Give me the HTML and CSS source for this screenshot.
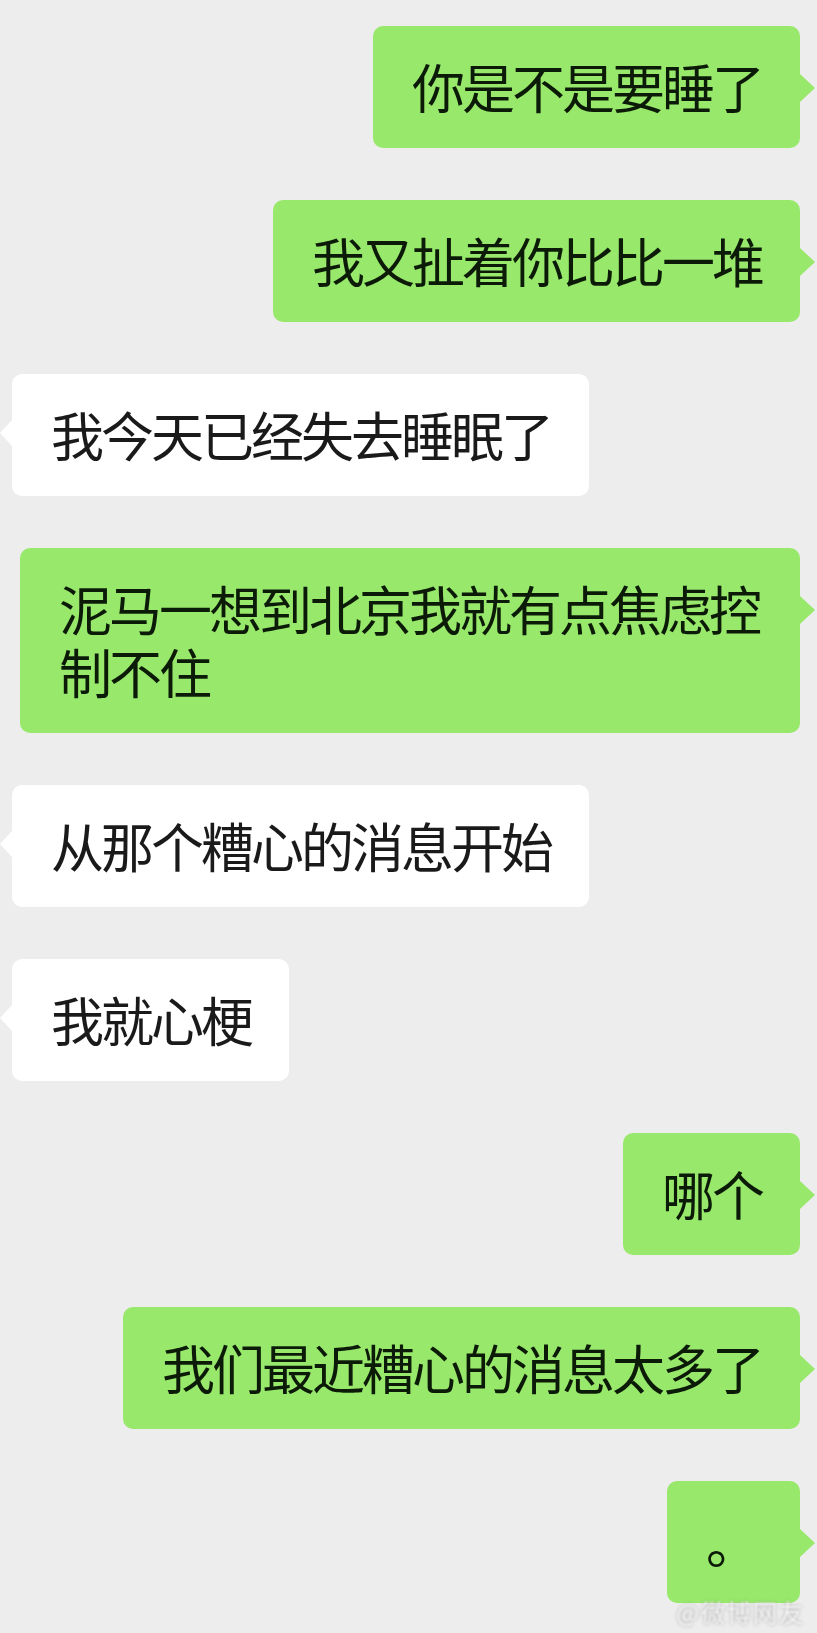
FILE: index.html
```html
<!DOCTYPE html>
<html lang="zh-CN">
<head>
    <meta charset="UTF-8">
    <meta name="viewport" content="width=device-width, initial-scale=1.0">
    <title>聊天记录</title>
    <link rel="stylesheet" href="styles.css">
</head>
<body>

    <div class="chat">
        <div class="msg msg-self">
            <div class="bubble">你是不是要睡了</div>
        </div>
        <div class="msg msg-self">
            <div class="bubble">我又扯着你比比一堆</div>
        </div>
        <div class="msg msg-other">
            <div class="bubble">我今天已经失去睡眠了</div>
        </div>
        <div class="msg msg-self">
            <div class="bubble">泥马一想到北京我就有点焦虑控制不住</div>
        </div>
        <div class="msg msg-other">
            <div class="bubble">从那个糟心的消息开始</div>
        </div>
        <div class="msg msg-other">
            <div class="bubble">我就心梗</div>
        </div>
        <div class="msg msg-self">
            <div class="bubble">哪个</div>
        </div>
        <div class="msg msg-self">
            <div class="bubble">我们最近糟心的消息太多了</div>
        </div>
        <div class="msg msg-self">
            <div class="bubble">。</div>
        </div>
    </div>

    <div class="watermark">@微博网友</div>

</body>
</html>
```

FILE: styles.css
```css
* {
    margin: 0;
    padding: 0;
    box-sizing: border-box;
}

body {
    background-color: #ededed;
    font-family: "Noto Sans CJK SC", "Noto Sans", sans-serif;
    min-height: 1633px;
    position: relative;
}

.chat {
    display: flex;
    flex-direction: column;
    gap: 52px;
    padding: 26px 17px 28px 12px;
}

.msg {
    display: flex;
}

.msg-self {
    justify-content: flex-end;
}

.msg-other {
    justify-content: flex-start;
}

.bubble {
    position: relative;
    min-width: 133px;
    max-width: 780px;
    padding: 29px 38px 30px 39px;
    font-size: 53px;
    letter-spacing: -3px;
    line-height: 63px;
    border-radius: 10px;
    word-break: break-all;
}

.msg-self .bubble {
    background-color: #98e86b;
    color: #0c1a08;
}

.msg-other .bubble {
    background-color: #fff;
    color: #1a1a1a;
}

/* little arrows */
.msg-self .bubble::after {
    content: "";
    position: absolute;
    top: 48px;
    right: -15px;
    border-top: 14px solid transparent;
    border-bottom: 14px solid transparent;
    border-left: 15px solid #98e86b;
}

.msg-other .bubble::before {
    content: "";
    position: absolute;
    top: 46px;
    left: -12px;
    border-top: 13px solid transparent;
    border-bottom: 13px solid transparent;
    border-right: 12px solid #fff;
}

.watermark {
    position: absolute;
    right: 12px;
    bottom: 8px;
    font-size: 24px;
    line-height: 26px;
    color: rgba(255, 255, 255, 0.95);
    text-shadow: 0 0 3px rgba(110, 110, 110, 0.8);
    filter: blur(0.8px);
    letter-spacing: 2px;
}
```
